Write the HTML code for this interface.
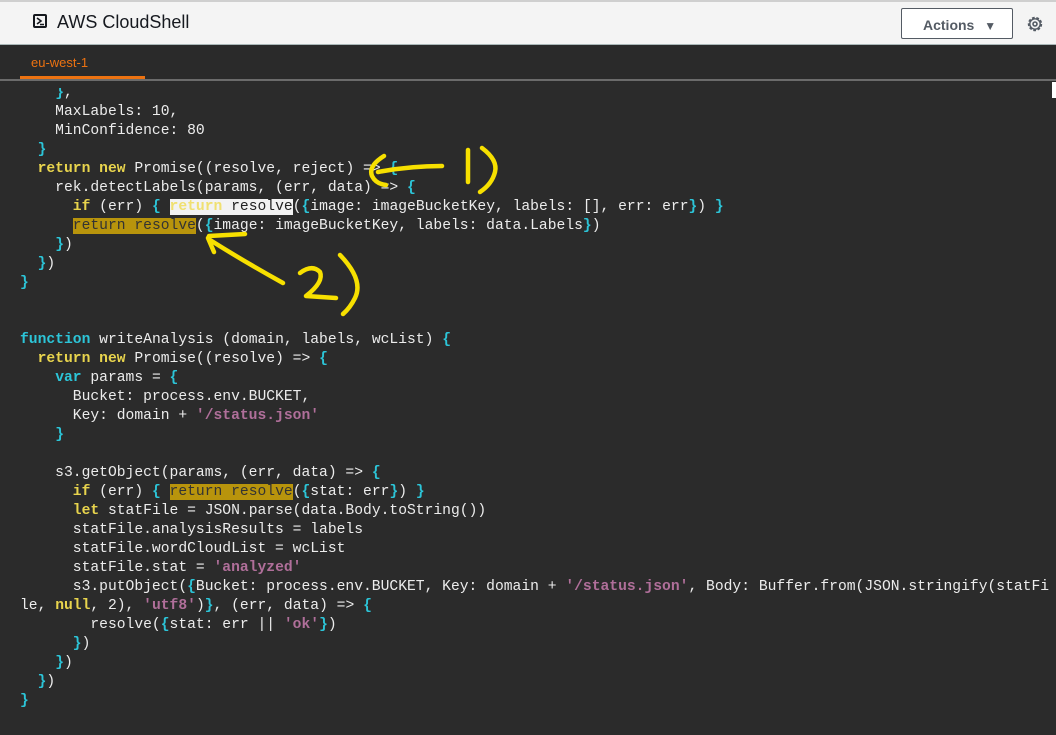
<!DOCTYPE html>
<html><head><meta charset="utf-8"><style>
*{margin:0;padding:0;box-sizing:border-box}
body{width:1056px;height:735px;overflow:hidden;background:#2b2b2b;font-family:"Liberation Sans",sans-serif;position:relative}
.hdr{position:absolute;left:0;top:0;width:1056px;height:45px;background:#f4f4f4;border-bottom:1px solid #aab7b8;border-top:2px solid #cfcfcf;z-index:2}
.title{position:absolute;left:57px;top:10px;font-size:18px;color:#16191f}
.icon{position:absolute;left:33px;top:12px;width:14px;height:14px;border:2px solid #16191f;border-radius:2px}
.btn{position:absolute;left:901px;top:6px;width:112px;height:31px;border:1px solid #545b64;border-radius:2px;background:#fff;font-weight:bold;font-size:14px;color:#545b64;padding:8px 0 0 21px}
.tabs{position:absolute;left:0;top:45px;width:1056px;height:36px;background:#2a2a2a;border-bottom:2px solid #6b6b6b;z-index:2}
.tab{position:absolute;left:31px;top:10px;font-size:13px;color:#ec7211}
.ul{position:absolute;left:20px;top:31px;width:125px;height:3px;background:#ec7211}
.clip{position:absolute;left:0;top:88px;width:1056px;height:647px;overflow:hidden}
pre{position:absolute;left:20px;top:-4px;font-family:"Liberation Mono",monospace;font-size:14.67px;line-height:19px;color:#ececec;white-space:pre}
.k{color:#e8d44d;font-weight:bold}.c{color:#2cc5d8;font-weight:bold}.s{color:#b06f9a;font-weight:bold}
.hw{background:#f2f2f2;color:#222}.hw .k{color:#f0e070}
.hy{background:#b8940c;color:#333}
</style></head><body>
<div class="hdr"><div class="icon"><svg width="10" height="10" style="position:absolute;left:0;top:0"><path d="M2 2 L6 5 L2 8 M5 8.5 H9" stroke="#16191f" stroke-width="1.6" fill="none"/></svg></div><div class="title">AWS CloudShell</div>
<div class="btn">Actions <span style="font-size:12px;margin-left:6px">▼</span></div>
<svg style="position:absolute;left:1026px;top:13px" width="18" height="18" viewBox="0 0 18 18"><circle cx="9" cy="9" r="6" fill="none" stroke="#545b64" stroke-width="2.4" stroke-dasharray="2.6 1.6"/><circle cx="9" cy="9" r="5.2" fill="none" stroke="#545b64" stroke-width="1.4"/><circle cx="9" cy="9" r="2" fill="none" stroke="#545b64" stroke-width="1.6"/></svg>
</div>
<div class="tabs"><div class="tab">eu-west-1</div><div class="ul"></div></div>
<div style="position:absolute;left:1052px;top:82px;width:4px;height:16px;background:#fff;z-index:3"></div>
<div class="clip"><pre>    <span class="c">}</span>,
    MaxLabels: 10,
    MinConfidence: 80
  <span class="c">}</span>
  <span class="k">return</span> <span class="k">new</span> Promise((resolve, reject) =&gt; <span class="c">{</span>
    rek.detectLabels(params, (err, data) =&gt; <span class="c">{</span>
      <span class="k">if</span> (err) <span class="c">{</span> <span class="hw"><span class="k">return</span> resolve</span>(<span class="c">{</span>image: imageBucketKey, labels: [], err: err<span class="c">}</span>) <span class="c">}</span>
      <span class="hy">return resolve</span>(<span class="c">{</span>image: imageBucketKey, labels: data.Labels<span class="c">}</span>)
    <span class="c">}</span>)
  <span class="c">}</span>)
<span class="c">}</span>


<span class="c">function</span> writeAnalysis (domain, labels, wcList) <span class="c">{</span>
  <span class="k">return</span> <span class="k">new</span> Promise((resolve) =&gt; <span class="c">{</span>
    <span class="c">var</span> params = <span class="c">{</span>
      Bucket: process.env.BUCKET,
      Key: domain + <span class="s">'/status.json'</span>
    <span class="c">}</span>

    s3.getObject(params, (err, data) =&gt; <span class="c">{</span>
      <span class="k">if</span> (err) <span class="c">{</span> <span class="hy">return resolve</span>(<span class="c">{</span>stat: err<span class="c">}</span>) <span class="c">}</span>
      <span class="k">let</span> statFile = JSON.parse(data.Body.toString())
      statFile.analysisResults = labels
      statFile.wordCloudList = wcList
      statFile.stat = <span class="s">'analyzed'</span>
      s3.putObject(<span class="c">{</span>Bucket: process.env.BUCKET, Key: domain + <span class="s">'/status.json'</span>, Body: Buffer.from(JSON.stringify(statFi
le, <span class="k">null</span>, 2), <span class="s">'utf8'</span>)<span class="c">}</span>, (err, data) =&gt; <span class="c">{</span>
        resolve(<span class="c">{</span>stat: err || <span class="s">'ok'</span><span class="c">}</span>)
      <span class="c">}</span>)
    <span class="c">}</span>)
  <span class="c">}</span>)
<span class="c">}</span></pre></div>
<svg style="position:absolute;left:0;top:0;z-index:4" width="1056" height="735" fill="none" stroke="#f7e000" stroke-width="4.5" stroke-linecap="round" stroke-linejoin="round">
<path d="M442 166 Q410 166 378 172"/>
<path d="M384 156 Q368 166 372 176 Q376 184 386 185"/>
<path d="M468 150 L468 182"/>
<path d="M482 148 Q498 160 495 172 Q492 184 480 192"/>
<path d="M283 283 Q245 262 210 240"/>
<path d="M209 236 L245 234"/>
<path d="M208 238 L214 252"/>
<path d="M300 273 Q312 264 320 272 Q324 282 306 296 L336 298"/>
<path d="M340 255 Q364 280 355 298 Q350 308 343 314"/>
</svg>
</body></html>
